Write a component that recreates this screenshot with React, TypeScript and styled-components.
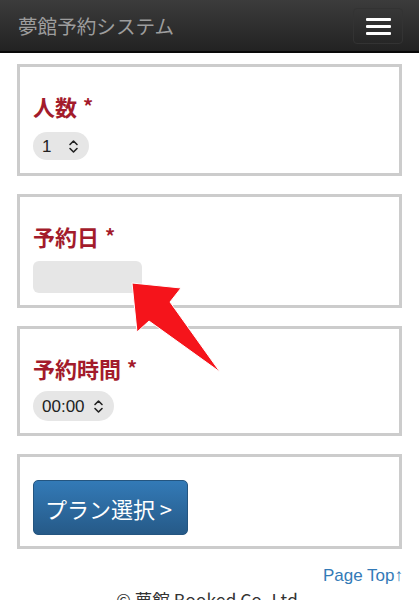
import React from 'react';
import styled, { createGlobalStyle } from 'styled-components';

const GlobalStyle = createGlobalStyle`
  body {
    margin: 0;
    background: #fff;
    font-family: "Noto Sans CJK JP", "Liberation Sans", sans-serif;
    color: #333;
  }
`;

const Page = styled.div`
  position: relative;
  width: 419px;
  min-height: 600px;
  overflow: hidden;
`;

const Navbar = styled.header`
  height: 51px;
  display: flex;
  align-items: center;
  justify-content: space-between;
  padding: 0 16px 0 18px;
  background: linear-gradient(to bottom, #3c3c3c 0%, #222 100%);
  border-bottom: 2px solid #080808;
`;

const Brand = styled.div`
  font-size: 19.6px;
  line-height: 1;
  color: #9d9d9d;
`;

const Toggle = styled.button`
  width: 50px;
  height: 36px;
  margin-top: 1px;
  display: flex;
  flex-direction: column;
  align-items: center;
  justify-content: center;
  gap: 4px;
  background: transparent;
  border: 1px solid #333;
  border-radius: 4px;
  padding: 0;
`;

const Bar = styled.span`
  display: block;
  width: 25px;
  height: 3px;
  background: #fff;
  border-radius: 1px;
`;

const Main = styled.main`
  display: flex;
  flex-direction: column;
  gap: 18px;
  padding: 11px 17px 0;
`;

const Card = styled.section<{ $top?: number; $bottom?: number }>`
  border: 3px solid #ccc;
  padding: ${p => p.$top ?? 24}px 13px ${p => p.$bottom ?? 13}px;
  display: flex;
  flex-direction: column;
  align-items: flex-start;
`;

const Label = styled.h2`
  margin: 0;
  height: 30px;
  display: flex;
  align-items: center;
  gap: 6px;
  font-size: 22px;
  line-height: 1;
  font-weight: 700;
  color: #a31b2b;
`;

const Required = styled.span`
  font-size: 20px;
  line-height: 1;
`;

const Pill = styled.div<{ $gap: number; $height: number }>`
  margin-top: ${p => p.$gap}px;
  height: ${p => p.$height}px;
  display: flex;
  align-items: center;
  gap: 8px;
  padding: 0 10px 0 9px;
  background: #e6e6e6;
  border-radius: 15px;
  font-family: "Liberation Sans", sans-serif;
  font-size: 17px;
  color: #222;
`;

const Value = styled.span<{ $min?: number }>`
  min-width: ${p => p.$min ?? 0}px;
  line-height: 1;
`;

const DateBox = styled.div`
  margin-top: 10px;
  width: 109px;
  height: 32px;
  background: #e6e6e6;
  border-radius: 6px;
`;

const PlanButton = styled.button`
  height: 55px;
  width: 155px;
  padding: 0 4px 0 0;
  font-family: "Noto Sans CJK JP", "Liberation Sans", sans-serif;
  font-size: 22px;
  color: #fff;
  background: linear-gradient(to bottom, #337ab7 0%, #265a88 100%);
  border: 1px solid #245580;
  border-radius: 5px;
`;

const Footer = styled.footer`
  display: flex;
  flex-direction: column;
  padding: 17px 16px 0;
`;

const PageTop = styled.a`
  align-self: flex-end;
  font-family: "Liberation Sans", sans-serif;
  font-size: 17px;
  color: #337ab7;
  text-decoration: none;
`;

const Copy = styled.p`
  margin: 4px 0 0;
  text-align: center;
  font-size: 17.5px;
  line-height: 20px;
  color: #333;
`;

const Overlay = styled.svg`
  position: absolute;
  left: 0;
  top: 0;
  pointer-events: none;
`;

const Chevrons = () => (
  <svg width="11" height="15" viewBox="0 0 11 15" fill="none" stroke="#222" strokeWidth="1.6" strokeLinecap="round" strokeLinejoin="round">
    <path d="M2 5.5 L5.5 2 L9 5.5" />
    <path d="M2 9.5 L5.5 13 L9 9.5" />
  </svg>
);

export default function App() {
  return (
    <Page>
      <GlobalStyle />
      <Navbar>
        <Brand>夢館予約システム</Brand>
        <Toggle aria-label="menu">
          <Bar />
          <Bar />
          <Bar />
        </Toggle>
      </Navbar>
      <Main>
        <Card>
          <Label>人数<Required>*</Required></Label>
          <Pill $gap={11} $height={28}>
            <Value $min={18}>1</Value>
            <Chevrons />
          </Pill>
        </Card>
        <Card $bottom={12}>
          <Label>予約日<Required>*</Required></Label>
          <DateBox />
        </Card>
        <Card $bottom={12}>
          <Label>予約時間<Required>*</Required></Label>
          <Pill $gap={8} $height={30}>
            <Value>00:00</Value>
            <Chevrons />
          </Pill>
        </Card>
        <Card $top={23} $bottom={11}>
          <PlanButton>プラン選択 &gt;</PlanButton>
        </Card>
      </Main>
      <Footer>
        <PageTop href="#">Page Top↑</PageTop>
        <Copy>© 夢館 Booked Co.,Ltd.</Copy>
      </Footer>
      <Overlay width="419" height="600" viewBox="0 0 419 600">
        <polygon
          points="132,283 181,288 170,302 220,372 149,321 137,332"
          fill="#f5141b"
          stroke="#fff"
          strokeWidth="1"
        />
      </Overlay>
    </Page>
  );
}
